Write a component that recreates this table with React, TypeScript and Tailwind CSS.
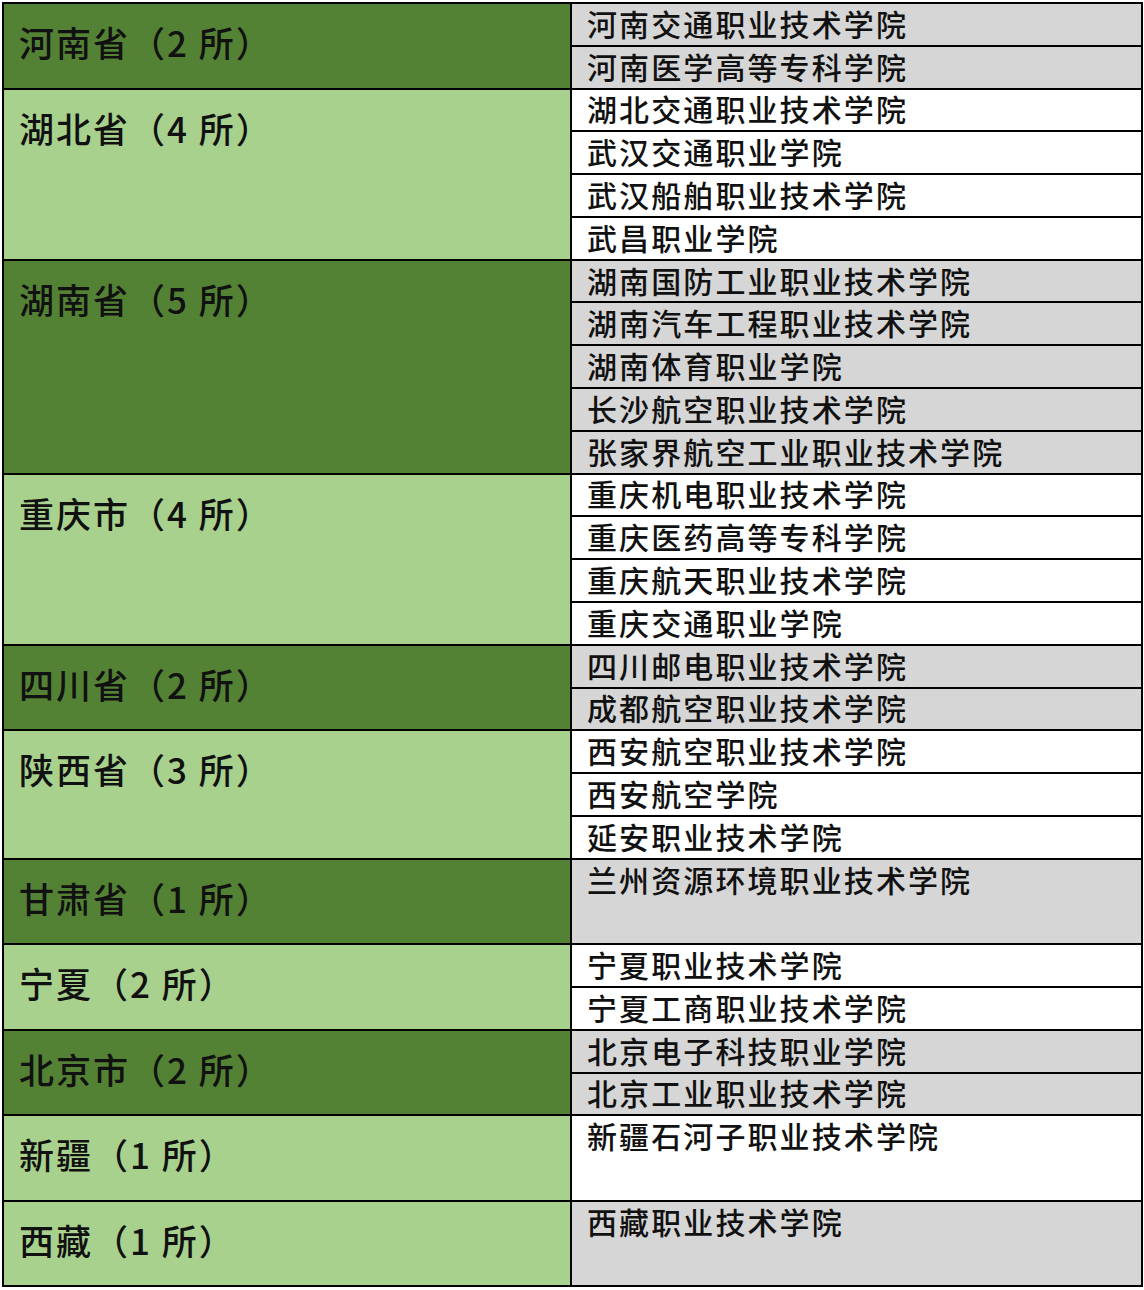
import React from "react";

type Group = {
  name: string;
  dark: boolean;
  gray: boolean;
  schools: string[];
};

const groups: Group[] = [
  { name: "河南省（2 所）", dark: true, gray: true, schools: ["河南交通职业技术学院", "河南医学高等专科学院"] },
  { name: "湖北省（4 所）", dark: false, gray: false, schools: ["湖北交通职业技术学院", "武汉交通职业学院", "武汉船舶职业技术学院", "武昌职业学院"] },
  { name: "湖南省（5 所）", dark: true, gray: true, schools: ["湖南国防工业职业技术学院", "湖南汽车工程职业技术学院", "湖南体育职业学院", "长沙航空职业技术学院", "张家界航空工业职业技术学院"] },
  { name: "重庆市（4 所）", dark: false, gray: false, schools: ["重庆机电职业技术学院", "重庆医药高等专科学院", "重庆航天职业技术学院", "重庆交通职业学院"] },
  { name: "四川省（2 所）", dark: true, gray: true, schools: ["四川邮电职业技术学院", "成都航空职业技术学院"] },
  { name: "陕西省（3 所）", dark: false, gray: false, schools: ["西安航空职业技术学院", "西安航空学院", "延安职业技术学院"] },
  { name: "甘肃省（1 所）", dark: true, gray: true, schools: ["兰州资源环境职业技术学院"] },
  { name: "宁夏（2 所）", dark: false, gray: false, schools: ["宁夏职业技术学院", "宁夏工商职业技术学院"] },
  { name: "北京市（2 所）", dark: true, gray: true, schools: ["北京电子科技职业学院", "北京工业职业技术学院"] },
  { name: "新疆（1 所）", dark: false, gray: false, schools: ["新疆石河子职业技术学院"] },
  { name: "西藏（1 所）", dark: false, gray: true, schools: ["西藏职业技术学院"] },
];

const spanClass: Record<number, string> = {
  2: "row-span-2",
  3: "row-span-3",
  4: "row-span-4",
  5: "row-span-5",
};

export default function App() {
  return (
    <div className="bg-white min-h-[1290px] pt-[2px] pl-[2px] font-['Noto_Sans_CJK_SC','Noto_Sans',sans-serif] font-medium text-[#111]">
      <div className="w-[1141px] border-2 border-black bg-black grid grid-cols-[566px_569px] grid-rows-[repeat(30,40.79px)] gap-[2px]">
        {groups.map((g) => {
          const rows = Math.max(2, g.schools.length);
          return (
            <React.Fragment key={g.name}>
              <div
                className={`col-start-1 ${spanClass[rows]} ${
                  g.dark ? "bg-[#548235]" : "bg-[#a9d18e]"
                } pl-[15px] pt-[20px] text-[35px] leading-none tracking-[2px]`}
              >
                {g.name}
              </div>
              {g.schools.length === 1 ? (
                <div
                  className={`col-start-2 row-span-2 ${
                    g.gray ? "bg-[#d6d6d6]" : "bg-white"
                  } pl-[15px]`}
                >
                  <div className="h-[40.79px] flex items-center pb-[3px] text-[30px] leading-none tracking-[2.1px]">
                    {g.schools[0]}
                  </div>
                </div>
              ) : (
                g.schools.map((s) => (
                  <div
                    key={s}
                    className={`col-start-2 ${
                      g.gray ? "bg-[#d6d6d6]" : "bg-white"
                    } pl-[15px] flex items-center pb-[3px] text-[30px] leading-none tracking-[2.1px]`}
                  >
                    {s}
                  </div>
                ))
              )}
            </React.Fragment>
          );
        })}
      </div>
    </div>
  );
}
